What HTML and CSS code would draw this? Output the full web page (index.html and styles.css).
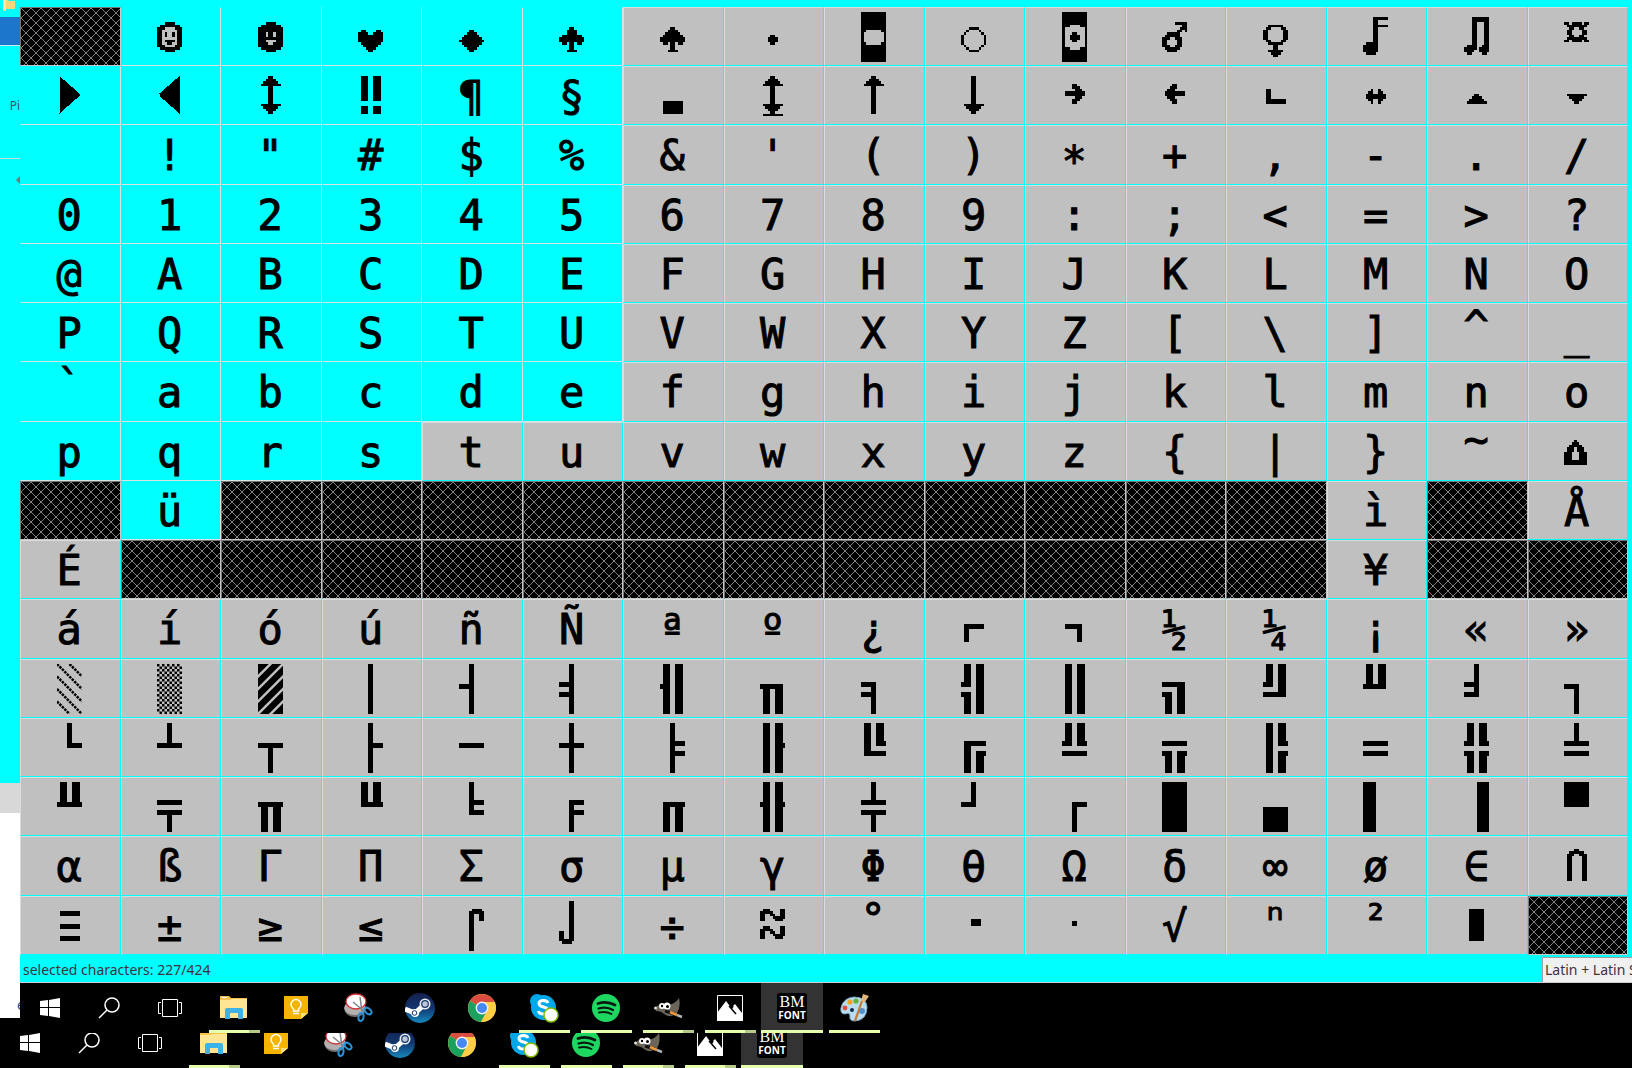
FILE: index.html
```html
<!DOCTYPE html>
<html lang="en">
<head>
<meta charset="utf-8">
<title>BMFont</title>
<link rel="stylesheet" href="styles.css">
</head>
<body>
<svg class="defs" aria-hidden="true">
<defs>
<pattern id="checker" width="2" height="2" patternUnits="userSpaceOnUse"><path d="M0 0H1V1H0ZM1 1H2V2H1Z"/></pattern>
<linearGradient id="steamFill" x1="0" y1="0" x2="0" y2="1"><stop offset="0" stop-color="#14204e"/><stop offset=".5" stop-color="#12366f"/><stop offset="1" stop-color="#1689bd"/></linearGradient>
<symbol id="windows" viewBox="0 0 30 30"><path fill="#fff" d="M5 8L13 7V14H5ZM14 7L25 5V14H14ZM5 15H13V23L5 22ZM14 15H25V25L14 23Z"/></symbol>
<symbol id="search" viewBox="0 0 30 30"><circle cx="17" cy="12" r="7" fill="none" stroke="#fff" stroke-width="1.5"/><path d="M12 17L4 25" stroke="#fff" stroke-width="1.5"/></symbol>
<symbol id="taskview" viewBox="0 0 30 30"><path fill="none" stroke="#fff" d="M7.500 6.500H22.500V23.500H7.500ZM6 9.500H3.500V20.500H6M24 9.500H26.500V20.500H24"/></symbol>
<symbol id="folder" viewBox="0 0 30 30"><path fill="#f5c24c" d="M1 3H10L12 5H28V9H1Z"/><path fill="#fff" d="M3 4H8V5H3Z"/><path fill="#ffe594" d="M1 7H11L13 6H28V25H1Z"/><path fill="#3db2e8" d="M6 26V17Q6 15 8 15H22Q24 15 24 17V26H19V20H11V26Z"/></symbol>
<symbol id="keep" viewBox="0 0 30 30"><path fill="#f5b400" d="M3 3H27V20L20 26H3Z"/><path fill="#ffdf80" d="M20 26V20H27Z"/><g fill="none" stroke="#fff" stroke-width="1.500"><path d="M12.500 18V16Q10 14 10 11.500A5 5 0 0 1 20 11.500Q20 14 17.500 16V18Z"/><path d="M12 20.500H18"/></g></symbol>
<symbol id="snip" viewBox="0 0 30 30"><ellipse cx="12" cy="17" rx="10" ry="7" fill="#77706f"/><ellipse cx="12" cy="15" rx="11" ry="7" fill="#b5b0b0"/><ellipse cx="13" cy="8.500" rx="10" ry="7.500" fill="#fff" stroke="#cf3438" stroke-width="1.300"/><path d="M10 9L22 19M17 4L19 19" stroke="#79848c" stroke-width="1.500"/><ellipse cx="25" cy="18" rx="2.500" ry="4" transform="rotate(-50 25 18)" fill="none" stroke="#2792d6" stroke-width="2"/><ellipse cx="18" cy="24" rx="2.500" ry="4" transform="rotate(10 18 24)" fill="none" stroke="#2792d6" stroke-width="2"/></symbol>
<symbol id="steam" viewBox="0 0 30 30"><circle cx="15" cy="15" r="15" fill="url(#steamFill)"/><path d="M0 16L10 20L20 11" fill="none" stroke="#fff" stroke-width="5"/><circle cx="20" cy="11" r="5.500" fill="#e8edf2"/><circle cx="20" cy="11" r="3.300" fill="#bcc8d6" stroke="#17376c" stroke-width="1.200"/><circle cx="10" cy="20" r="4" fill="#fff"/><circle cx="9.500" cy="20" r="2.300" fill="none" stroke="#17376c"/></symbol>
<symbol id="chrome" viewBox="0 0 30 30"><circle cx="15" cy="15" r="14" fill="#ffce45"/><path fill="#db4c40" d="M15 15L3 8A14 14 0 0 1 27.500 9H15Z"/><path fill="#1aa15f" d="M15 15L3 8A14 14 0 0 0 14 29L20 18Z"/><path fill="#ffce45" d="M20 18L14 29A14 14 0 0 0 27.500 9H15Z"/><circle cx="15" cy="15" r="6.400" fill="#f3f3f3"/><circle cx="15" cy="15" r="5" fill="#4688f4"/></symbol>
<symbol id="skype" viewBox="0 0 30 30"><circle cx="8" cy="8" r="7" fill="#00a8ea"/><circle cx="20" cy="21" r="7" fill="#00a8ea"/><circle cx="14.500" cy="14.500" r="12.500" fill="#00a8ea"/><path d="M19 10Q18 7.500 14.500 7.500Q10 7.500 10 10.500Q10 13 14.500 14Q19 15 19 18Q19 21 14.500 21Q10 21 9.500 18" fill="none" stroke="#fff" stroke-width="3"/><circle cx="22" cy="22" r="7" fill="#fff" stroke="#7fba00" stroke-width="1.500"/></symbol>
<symbol id="spotify" viewBox="0 0 30 30"><circle cx="15" cy="15" r="14" fill="#1ed760"/><g fill="none" stroke="#0a1a10" stroke-linecap="round"><path stroke-width="2.800" d="M7 10.500Q16 7.500 24 12"/><path stroke-width="2.300" d="M7.500 15.500Q15.500 13 22 17"/><path stroke-width="1.900" d="M8 19.500Q15 18 20.500 21"/></g></symbol>
<symbol id="gimp" viewBox="0 0 30 30"><path fill="#6b6559" d="M2 15Q4 12 8 12Q12 14 15 12Q22 11 26 5Q28 14 24 20Q18 26 11 21Q8 18 3 18Z"/><circle cx="9" cy="13" r="3" fill="#fff"/><circle cx="14" cy="13" r="3.500" fill="#fff"/><circle cx="9" cy="13" r="1.200"/><circle cx="14.500" cy="13.500" r="1.500"/><circle cx="2.500" cy="15" r="1.500" fill="#ddd"/><path d="M12 18L22 21" stroke="#111" stroke-width="3"/><path d="M17 19L24 22" stroke="#f09a3a" stroke-width="2.500"/><path d="M24 22L29 24" stroke="#a9b4bc" stroke-width="2.500"/></symbol>
<symbol id="photos" viewBox="0 0 30 30"><path fill="none" stroke="#fff" d="M2.500 2.500H27.500V27.500H2.500Z"/><path fill="#fff" d="M2 20L11 8L17 16L20 12L28 21V28H2ZM18 13L20 11L27 20V23Z"/><path d="M14 13L21 21" stroke="#000" stroke-width="1.500"/></symbol>
<symbol id="paint" viewBox="0 0 30 30"><path fill="#b9dcee" stroke="#77a9c5" d="M15 4Q27 4 28 14Q28 27 16 28Q10 28 11 23Q11 19 6 21Q1 21 2 15Q4 5 15 4Z"/><circle cx="11" cy="9" r="2.600" fill="#f3a12b"/><circle cx="17" cy="8" r="2.600" fill="#62b03c"/><circle cx="6" cy="15" r="2.400" fill="#df4d43"/><circle cx="23" cy="18" r="3" fill="#4e91d2"/><circle cx="13" cy="17" r="2" fill="#152c42"/><path d="M16 28L23 8" stroke="#c47a35" stroke-width="2.200"/><path fill="#dfb67c" d="M22 8L24 1L30 3L26 9Z"/></symbol>
</defs>
</svg>
<div class="desk">
<aside class="behind">
<svg class="tiny-folder" viewBox="0 0 20 17"><path fill="#f7d774" d="M3 0H7L9 1H15V9H6V11H3Z"/><path fill="#ffe9a2" d="M3 0H6V11L3 9Z"/></svg>
<div class="blue"></div>
<div class="pane pin">Pi</div>
<div class="pane arrow"><svg viewBox="0 0 4 8"><path fill="#777" d="M4 0V8L0 4Z"/></svg></div>
<div class="grey"></div>
<div class="white">e</div>
<div class="black"></div>
</aside>
<main>
<section class="chars">
<div class="x"></div>
<div class="s"><svg viewBox="0 0 10 20"><path d="M3 4H7V5H9V6H10V14H9V15H7V16H3V15H1V14H0V6H1V5H3Z"/><path class="g" d="M3 6H7V7H8V13H7V14H3V13H2V7H3Z"/><path d="M3 8H4V10H3ZM6 8H7V10H6ZM3 11H7V12H6V13H4V12H3Z"/></svg></div>
<div class="s"><svg viewBox="0 0 10 20"><path d="M3 4H7V5H9V6H10V14H9V15H7V16H3V15H1V14H0V6H1V5H3Z"/><path class="g" d="M3 8H4V10H3ZM6 8H7V10H6ZM3 11H7V12H6V13H4V12H3Z"/></svg></div>
<div class="s"><svg viewBox="0 0 10 20"><path d="M1 7h2v1h1v1h2v-1h1v-1h2v1h1v4h-1v1h-1v1h-1v1h-1v1h-2v-1h-1v-1h-1v-1h-1v-1h-1v-4h1z"/></svg></div>
<div class="s"><svg viewBox="0 0 10 20"><path d="M4 7h2v1h1v1h1v1h1v1h1v1h-1v1h-1v1h-1v1h-1v1h-2v-1h-1v-1h-1v-1h-1v-1h-1v-1h1v-1h1v-1h1v-1h1z"/></svg></div>
<div class="s"><svg viewBox="0 0 10 20"><path d="M4 6H6V7H7V9H9V10H10V12H9V13H7V12H6V15H7V16H3V15H4V12H3V13H1V12H0V10H1V9H3V7H4Z"/></svg></div>
<div><svg viewBox="0 0 10 20"><path d="M4 6H6V7H7V8H8V9H9V10H10V12H9V13H7V12H6V15H7V16H3V15H4V12H3V13H1V12H0V10H1V9H2V8H3V7H4Z"/></svg></div>
<div><svg viewBox="0 0 10 20"><path d="M4 9H6V10H7V12H6V13H4V12H3V10H4Z"/></svg></div>
<div><svg viewBox="0 0 10 20"><path d="M0 0H10V20H0Z"/><path class="g" d="M2 7H8V8H9V12H8V13H2V12H1V8H2Z"/></svg></div>
<div><svg viewBox="0 0 10 20"><path d="M3 6H7V7H8V8H9V9H10V13H9V14H8V15H7V16H3V15H2V14H1V13H0V9H1V8H2V7H3Z"/><path class="g" d="M3 7H7V8H8V9H9V13H8V14H7V15H3V14H2V13H1V9H2V8H3Z"/></svg></div>
<div><svg viewBox="0 0 10 20"><path d="M0 0H10V20H0Z"/><path class="g" d="M3 5H7V6H9V14H7V15H3V14H1V6H3Z"/><path d="M4 8H6V9H7V11H6V12H4V11H3V9H4Z"/></svg></div>
<div><svg viewBox="0 0 10 20"><path d="M5 4H10V8H9V7H8V8H7V10H8V14H7V15H6V16H2V15H1V14H0V10H1V9H2V8H6V7H7V6H8V5H5Z"/><path class="g" d="M3 10H5V11H6V13H5V14H3V13H2V11H3Z"/></svg></div>
<div><svg viewBox="0 0 10 20"><path d="M2 5H8V6H9V7H10V11H9V12H8V13H6V15H8V16H7V17H6V18H4V17H3V16H2V15H4V13H2V12H1V11H0V7H1V6H2Z"/><path class="g" d="M3 6H7V7H8V11H7V12H3V11H2V7H3Z"/></svg></div>
<div><svg viewBox="0 0 10 20"><path d="M4 2H10V3H6V5H10V6H6V16H5V17H1V16H0V13H1V12H4Z"/></svg></div>
<div><svg viewBox="0 0 10 20"><path d="M3 2H10V16H9V17H7V16H6V14H7V13H8V4H5V15H4V16H3V17H1V16H0V14H1V13H3Z"/></svg></div>
<div><svg viewBox="0 0 10 20"><path d="M0 4H2V5H3V4H7V5H8V4H10V5H9V6H8V7H9V9H8V10H9V11H10V12H8V11H7V12H3V11H2V12H0V11H1V10H2V9H1V7H2V6H1V5H0Z"/><path class="g" d="M4 6H6V7H7V9H6V10H4V9H3V7H4Z"/></svg></div>

<div class="s"><svg viewBox="0 0 10 20"><path d="M1 2L9 9V10L1 17Z"/></svg></div>
<div class="s"><svg viewBox="0 0 10 20"><path d="M9 2L1 9V10L9 17Z"/></svg></div>
<div class="s"><svg viewBox="0 0 10 20"><path d="M4 2H6V3H7V4H8V5H9V6H6V13H9V14H8V15H7V16H6V17H4V16H3V15H2V14H1V13H4V6H1V5H2V4H3V3H4Z"/></svg></div>
<div class="s"><svg viewBox="0 0 10 20"><path d="M1 2H4V12H1ZM6 2H9V12H6ZM1 14H4V17H1ZM6 14H9V17H6Z"/></svg></div>
<div class="s">¶</div>
<div class="s">§</div>
<div><svg viewBox="0 0 10 20"><path d="M1 12H9V17H1Z"/></svg></div>
<div><svg viewBox="0 0 10 20"><path d="M4 2H6V3H7V4H8V5H9V6H6V13H9V14H8V15H7V16H6V17H9V18H1V17H4V16H3V15H2V14H1V13H4V6H1V5H2V4H3V3H4Z"/></svg></div>
<div><svg viewBox="0 0 10 20"><path d="M4 2H6V3H7V4H8V5H9V6H6V17H4V6H1V5H2V4H3V3H4Z"/></svg></div>
<div><svg viewBox="0 0 10 20"><path d="M4 2H6V13H9V14H8V15H7V16H6V17H4V16H3V15H2V14H1V13H4Z"/></svg></div>
<div><svg viewBox="0 0 10 20"><path d="M4 5H6V6H7V7H8V8H9V10H8V11H7V12H6V13H4V11H5V10H1V8H5V7H4Z"/></svg></div>
<div><svg viewBox="0 0 10 20"><path d="M6 5H4V6H3V7H2V8H1V10H2V11H3V12H4V13H6V11H5V10H9V8H5V7H6Z"/></svg></div>
<div><svg viewBox="0 0 10 20"><path d="M1 7H3V11H9V13H1Z"/></svg></div>
<div><svg viewBox="0 0 10 20"><path d="M1 9H2V8H3V7H4V9H6V7H7V8H8V9H9V11H8V12H7V13H6V11H4V13H3V12H2V11H1Z"/></svg></div>
<div><svg viewBox="0 0 10 20"><path d="M4 9H6V10H7V11H8V12H9V13H1V12H2V11H3V10H4Z"/></svg></div>
<div><svg viewBox="0 0 10 20"><path d="M1 9H9V10H8V11H7V12H6V13H4V12H3V11H2V10H1Z"/></svg></div>

<div class="s"></div><div class="s">!</div><div class="s">"</div><div class="s">#</div><div class="s">$</div><div class="s">%</div>
<div>&amp;</div><div>'</div><div>(</div><div>)</div><div class="down">*</div><div>+</div><div>,</div><div>-</div><div>.</div><div>/</div>

<div class="s">0</div><div class="s">1</div><div class="s">2</div><div class="s">3</div><div class="s">4</div><div class="s">5</div>
<div>6</div><div>7</div><div>8</div><div>9</div><div>:</div><div>;</div><div>&lt;</div><div>=</div><div>&gt;</div><div>?</div>

<div class="s">@</div><div class="s">A</div><div class="s">B</div><div class="s">C</div><div class="s">D</div><div class="s">E</div>
<div>F</div><div>G</div><div>H</div><div>I</div><div>J</div><div>K</div><div>L</div><div>M</div><div>N</div><div>O</div>

<div class="s">P</div><div class="s">Q</div><div class="s">R</div><div class="s">S</div><div class="s">T</div><div class="s">U</div>
<div>V</div><div>W</div><div>X</div><div>Y</div><div>Z</div><div>[</div><div>\</div><div>]</div><div class="raised">^</div><div>_</div>

<div class="s raised">`</div><div class="s">a</div><div class="s">b</div><div class="s">c</div><div class="s">d</div><div class="s">e</div>
<div>f</div><div>g</div><div>h</div><div>i</div><div>j</div><div>k</div><div>l</div><div>m</div><div>n</div><div>o</div>

<div class="s">p</div><div class="s">q</div><div class="s">r</div><div class="s">s</div><div>t</div><div>u</div>
<div>v</div><div>w</div><div>x</div><div>y</div><div>z</div><div>{</div><div>|</div><div>}</div><div class="high">~</div>
<div><svg viewBox="0 0 10 20"><path fill-rule="evenodd" d="M4 5H5V6H6V7H7V8H8V10H9V15H0V10H1V8H2V7H3V6H4ZM4 8V10H3V13H6V10H5V8Z"/></svg></div>

<div class="x"></div><div class="s">ü</div><div class="x"></div><div class="x"></div><div class="x"></div><div class="x"></div><div class="x"></div><div class="x"></div><div class="x"></div><div class="x"></div><div class="x"></div><div class="x"></div><div class="x"></div><div>ì</div><div class="x"></div><div>Å</div>

<div>É</div><div class="x"></div><div class="x"></div><div class="x"></div><div class="x"></div><div class="x"></div><div class="x"></div><div class="x"></div><div class="x"></div><div class="x"></div><div class="x"></div><div class="x"></div><div class="x"></div><div>¥</div><div class="x"></div><div class="x"></div>

<div>á</div><div>í</div><div>ó</div><div>ú</div><div>ñ</div><div>Ñ</div><div>ª</div><div>º</div><div>¿</div>
<div><svg viewBox="0 0 10 20"><path d="M1 8H9V10H3V15H1Z"/></svg></div>
<div><svg viewBox="0 0 10 20"><path d="M1 8H8V15H6V10H1Z"/></svg></div>
<div>½</div><div>¼</div><div>¡</div><div>«</div><div>»</div>

<div><svg class="soft" viewBox="0 0 10 20"><path class="dots" d="M0 0L10 10M5 0L10 5M0 5L10 15M0 10L10 20M0 15L5 20"/></svg></div>
<div><svg class="soft" viewBox="0 0 10 20"><path fill="url(#checker)" d="M0 0H10V20H0Z"/></svg></div>
<div><svg class="soft" viewBox="0 0 10 20"><path d="M0 0H10V20H0Z"/><path class="gaps" d="M6 -1L-1 6M11 -1L-1 11M11 4L-1 16M11 9L-1 21M11 14L4 21"/></svg></div>
<div><svg viewBox="0 0 10 20"><path d="M4 0H6V20H4Z"/></svg></div>
<div><svg viewBox="0 0 10 20"><path d="M4 0H6V20H4V10H0V8H4Z"/></svg></div>
<div><svg viewBox="0 0 10 20"><path d="M4 0H6V20H4V13H0V11H4V9H0V7H4Z"/></svg></div>
<div><svg viewBox="0 0 10 20"><path d="M1 0H4V20H1V10H0V8H1ZM6 0H9V20H6Z"/></svg></div>
<div><svg viewBox="0 0 10 20"><path d="M0 8H9V20H6V10H4V20H1V10H0Z"/></svg></div>
<div><svg viewBox="0 0 10 20"><path d="M0 7H6V20H4V13H0V11H4V9H0Z"/></svg></div>
<div><svg viewBox="0 0 10 20"><path d="M1 0H4V9H0V7H1ZM0 11H4V20H1V13H0ZM6 0H9V20H6Z"/></svg></div>
<div><svg viewBox="0 0 10 20"><path d="M1 0H4V20H1ZM6 0H9V20H6Z"/></svg></div>
<div><svg viewBox="0 0 10 20"><path d="M0 7H9V20H6V9H0ZM0 11H4V20H1V13H0Z"/></svg></div>
<div><svg viewBox="0 0 10 20"><path d="M1 0H4V9H0V7H1ZM6 0H9V13H0V11H6Z"/></svg></div>
<div><svg viewBox="0 0 10 20"><path d="M1 0H4V8H6V0H9V10H0V8H1Z"/></svg></div>
<div><svg viewBox="0 0 10 20"><path d="M4 0H6V13H0V11H4V9H0V7H4Z"/></svg></div>
<div><svg viewBox="0 0 10 20"><path d="M0 8H6V20H4V10H0Z"/></svg></div>

<div><svg viewBox="0 0 10 20"><path d="M4 0H6V8H10V10H4Z"/></svg></div>
<div><svg viewBox="0 0 10 20"><path d="M4 0H6V8H10V10H0V8H4Z"/></svg></div>
<div><svg viewBox="0 0 10 20"><path d="M0 8H10V10H6V20H4V10H0Z"/></svg></div>
<div><svg viewBox="0 0 10 20"><path d="M4 0H6V8H10V10H6V20H4Z"/></svg></div>
<div><svg viewBox="0 0 10 20"><path d="M0 8H10V10H0Z"/></svg></div>
<div><svg viewBox="0 0 10 20"><path d="M4 0H6V8H10V10H6V20H4V10H0V8H4Z"/></svg></div>
<div><svg viewBox="0 0 10 20"><path d="M4 0H6V7H10V9H6V11H10V13H6V20H4Z"/></svg></div>
<div><svg viewBox="0 0 10 20"><path d="M1 0H4V20H1ZM6 0H9V8H10V10H9V20H6Z"/></svg></div>
<div><svg viewBox="0 0 10 20"><path d="M1 0H4V11H10V13H1ZM6 0H9V7H10V9H6Z"/></svg></div>
<div><svg viewBox="0 0 10 20"><path d="M1 7H10V9H4V20H1ZM6 11H10V13H9V20H6Z"/></svg></div>
<div><svg viewBox="0 0 10 20"><path d="M1 0H4V9H0V7H1ZM6 0H9V7H10V9H6ZM0 11H10V13H0Z"/></svg></div>
<div><svg viewBox="0 0 10 20"><path d="M0 7H10V9H0ZM0 11H4V20H1V13H0ZM6 11H10V13H9V20H6Z"/></svg></div>
<div><svg viewBox="0 0 10 20"><path d="M1 0H4V20H1ZM6 0H9V7H10V9H6ZM6 11H10V13H9V20H6Z"/></svg></div>
<div><svg viewBox="0 0 10 20"><path d="M0 7H10V9H0ZM0 11H10V13H0Z"/></svg></div>
<div><svg viewBox="0 0 10 20"><path d="M1 0H4V9H0V7H1ZM6 0H9V7H10V9H6ZM0 11H4V20H1V13H0ZM6 11H10V13H9V20H6Z"/></svg></div>
<div><svg viewBox="0 0 10 20"><path d="M4 0H6V7H10V9H0V7H4ZM0 11H10V13H0Z"/></svg></div>

<div><svg viewBox="0 0 10 20"><path d="M1 0H4V8H6V0H9V8H10V10H0V8H1Z"/></svg></div>
<div><svg viewBox="0 0 10 20"><path d="M0 7H10V9H0ZM0 11H10V13H6V20H4V13H0Z"/></svg></div>
<div><svg viewBox="0 0 10 20"><path d="M0 8H10V10H9V20H6V10H4V20H1V10H0Z"/></svg></div>
<div><svg viewBox="0 0 10 20"><path d="M1 0H4V8H6V0H9V8H10V10H1Z"/></svg></div>
<div><svg viewBox="0 0 10 20"><path d="M4 0H6V7H10V9H6V11H10V13H4Z"/></svg></div>
<div><svg viewBox="0 0 10 20"><path d="M4 7H10V9H6V11H10V13H6V20H4Z"/></svg></div>
<div><svg viewBox="0 0 10 20"><path d="M1 8H10V10H9V20H6V10H4V20H1Z"/></svg></div>
<div><svg viewBox="0 0 10 20"><path d="M1 0H4V20H1V10H0V8H1ZM6 0H9V8H10V10H9V20H6Z"/></svg></div>
<div><svg viewBox="0 0 10 20"><path d="M4 0H6V7H10V9H0V7H4ZM0 11H10V13H6V20H4V13H0Z"/></svg></div>
<div><svg viewBox="0 0 10 20"><path d="M4 0H6V10H0V8H4Z"/></svg></div>
<div><svg viewBox="0 0 10 20"><path d="M4 8H10V10H6V20H4Z"/></svg></div>
<div><svg viewBox="0 0 10 20"><path d="M0 0H10V20H0Z"/></svg></div>
<div><svg viewBox="0 0 10 20"><path d="M0 10H10V20H0Z"/></svg></div>
<div><svg viewBox="0 0 10 20"><path d="M0 0H5V20H0Z"/></svg></div>
<div><svg viewBox="0 0 10 20"><path d="M5 0H10V20H5Z"/></svg></div>
<div><svg viewBox="0 0 10 20"><path d="M0 0H10V10H0Z"/></svg></div>

<div>α</div><div>ß</div><div>Γ</div><div>Π</div><div>Σ</div><div>σ</div><div>µ</div><div>γ</div><div>Φ</div><div>θ</div><div>Ω</div><div>δ</div><div>∞</div><div>ø</div><div>∈</div>
<div><svg viewBox="0 0 10 20"><path d="M4 3H6V4H8V5H9V16H7V6H6V5H4V6H3V16H1V5H2V4H4Z"/></svg></div>

<div><svg viewBox="0 0 10 20"><path d="M1 4H9V6H1ZM1 9H9V11H1ZM1 14H9V16H1Z"/></svg></div>
<div>±</div><div>≥</div><div>≤</div>
<div><svg viewBox="0 0 10 20"><path d="M5 3H9V4H10V8H8V5H6V20H4V4H5Z"/></svg></div>
<div><svg viewBox="0 0 10 20"><path d="M4 0H6V16H5V17H1V16H0V12H2V15H4Z"/></svg></div>
<div>÷</div>
<div><svg viewBox="0 0 10 20"><path d="M1 3H4V4H5V5H6V6H8V3H10V7H9V8H6V7H5V6H4V5H2V8H0V4H1ZM1 10H4V11H5V12H6V13H8V10H10V14H9V15H6V14H5V13H4V12H2V15H0V11H1Z"/></svg></div>
<div class="raised">°</div>
<div><svg viewBox="0 0 10 20"><path d="M4 7H8V10H4Z"/></svg></div>
<div><svg viewBox="0 0 10 20"><path d="M4 8H6V10H4Z"/></svg></div>
<div>√</div><div class="raised">ⁿ</div><div class="raised">²</div>
<div><svg viewBox="0 0 10 20"><path d="M2 3H8V16H2Z"/></svg></div>
<div class="x"></div>
</section>
<footer class="status"><span>selected characters: 227/424</span><span class="subset">Latin + Latin S</span></footer>
<nav class="taskbar">
<button class="sys" aria-label="Start"><svg><use href="#windows"/></svg></button>
<button class="sys" aria-label="Search"><svg><use href="#search"/></svg></button>
<button class="sys last" aria-label="Task View"><svg><use href="#taskview"/></svg></button>
<button class="open many" aria-label="File Explorer"><svg><use href="#folder"/></svg></button>
<button aria-label="Keep"><svg><use href="#keep"/></svg></button>
<button aria-label="Snipping Tool"><svg><use href="#snip"/></svg></button>
<button aria-label="Steam"><svg><use href="#steam"/></svg></button>
<button aria-label="Chrome"><svg><use href="#chrome"/></svg></button>
<button class="open" aria-label="Skype"><svg><use href="#skype"/></svg></button>
<button class="open" aria-label="Spotify"><svg><use href="#spotify"/></svg></button>
<button class="open many" aria-label="GIMP"><svg><use href="#gimp"/></svg></button>
<button class="open many" aria-label="Photos"><svg><use href="#photos"/></svg></button>
<button class="active"><span class="bm">BM<b>FONT</b></span></button>
<button class="open" aria-label="Paint"><svg><use href="#paint"/></svg></button>
</nav>
</main>
</div>
<nav class="taskbar cut">
<button class="sys" aria-label="Start"><svg><use href="#windows"/></svg></button>
<button class="sys" aria-label="Search"><svg><use href="#search"/></svg></button>
<button class="sys last" aria-label="Task View"><svg><use href="#taskview"/></svg></button>
<button class="open many" aria-label="File Explorer"><svg><use href="#folder"/></svg></button>
<button aria-label="Keep"><svg><use href="#keep"/></svg></button>
<button aria-label="Snipping Tool"><svg><use href="#snip"/></svg></button>
<button aria-label="Steam"><svg><use href="#steam"/></svg></button>
<button aria-label="Chrome"><svg><use href="#chrome"/></svg></button>
<button class="open" aria-label="Skype"><svg><use href="#skype"/></svg></button>
<button class="open" aria-label="Spotify"><svg><use href="#spotify"/></svg></button>
<button class="open many" aria-label="GIMP"><svg><use href="#gimp"/></svg></button>
<button class="open many" aria-label="Photos"><svg><use href="#photos"/></svg></button>
<button class="active"><span class="bm">BM<b>FONT</b></span></button>
</nav>
</body>
</html>
```
FILE: styles.css
```css
* { box-sizing: border-box; }
body { margin: 0; background: #000; font-family: "Noto Sans", sans-serif; overflow: hidden; }
.defs { position: absolute; width: 0; height: 0; }

.desk { display: grid; grid-template-columns: 20px 1fr; background: #0ff; }

/* windows showing behind the character map */
.behind { display: flex; flex-direction: column; overflow: hidden; }
.tiny-folder { width: 20px; height: 17px; }
.blue { height: 29px; background: #1b76cc; border-bottom: 1px solid #c8e4ee; }
.pane { display: flex; justify-content: flex-end; border-bottom: 1px solid #cfd8d8; }
.pin { height: 113px; padding-top: 51px; font-size: 12px; color: #404a6a; }
.arrow { height: 624px; padding-top: 17px; border: 0; }
.arrow svg { width: 4px; height: 8px; }
.grey { height: 30px; background: #d8d8d8; }
.white { flex: 1; display: flex; align-items: flex-end; padding-left: 17px; background: #fff; color: #2b4a8a; font-size: 14px; line-height: 26px; }
.black { height: 15px; background: #000; }

main { min-width: 0; padding-top: 7px; }

/* character map */
.chars {
  display: grid;
  grid-template-columns: repeat(16, 1fr);
  grid-template-rows: repeat(4, 59px 59px 60px 59px);
  margin-right: 4px;
  font-family: "DejaVu Sans Mono", monospace;
  font-size: 42px;
  line-height: 52px;
  text-align: center;
  color: #000;
  -webkit-text-stroke: 1px #000;
}
.chars > div {
  min-width: 0;
  padding: 4px 2px 0 0;
  background: #c0c0c0;
  border-style: solid;
  border-width: 1px;
  border-color: #d8dcdc #0ff #0ff #d8dcdc;
}
.chars > .s { background: #0ff; border-color: #0ff #d8e4e4 #d8e4e4 #0ff; }
.chars > .x {
  background: #000 url("data:image/svg+xml,%3Csvg xmlns='http://www.w3.org/2000/svg' width='10' height='10'%3E%3Cpath d='M0 0L10 10M10 0L0 10' stroke='%23808080'/%3E%3C/svg%3E");
  border-color: #777 #c4c8c8 #c4c8c8 #777;
}
.chars svg { display: block; width: 25px; height: 50px; margin: 0 auto; shape-rendering: crispEdges; stroke: none; }
.chars .soft { shape-rendering: auto; }
.chars .g { fill: #c0c0c0; }
.chars .dots { stroke: #000; stroke-width: 1; stroke-dasharray: 1 .4; }
.chars .gaps { stroke: #c0c0c0; stroke-width: 1; }
.chars .raised { line-height: 38px; }
.chars .high { line-height: 26px; }
.chars .down { line-height: 64px; }

.status {
  display: flex;
  justify-content: space-between;
  height: 28px;
  padding: 2px 0 0 3px;
  border-bottom: 1px solid #c8d0d0;
  font-size: 14px;
  line-height: 25px;
  color: #40303c;
}
.subset { width: 90px; padding-left: 2px; overflow: hidden; white-space: nowrap; background: #f0f0f0; border-left: 1px solid #a0a0a0; border-top: 1px solid #a0a0a0; line-height: 23px; }

.taskbar { display: flex; height: 50px; background: #000; }
.taskbar button {
  display: flex;
  justify-content: center;
  width: 62px;
  height: 50px;
  padding: 10px 0 0;
  border: 0;
  background: none;
  color: #fff;
}
.taskbar svg { width: 30px; height: 30px; }
.taskbar .sys { width: 60px; }
.taskbar .last { margin-right: 3px; }
.taskbar .open { background: linear-gradient(#e6ffad, #e6ffad) 6px 100% / 51px 3px no-repeat; }
.taskbar .many { background: linear-gradient(90deg, #e6ffad 40px, #b6ca8a 40px) 6px 100% / 51px 3px no-repeat; }
.taskbar .active { background: #333; border-bottom: 3px solid #e6ffad; }
.bm { width: 30px; height: 30px; border-radius: 3px; background: #000; font-family: "Liberation Serif", serif; font-size: 16px; line-height: 17px; }
.bm b { display: block; font-family: "Open Sans", sans-serif; font-size: 10px; line-height: 10px; }
.cut { height: 35px; align-items: flex-end; overflow: hidden; }
```
